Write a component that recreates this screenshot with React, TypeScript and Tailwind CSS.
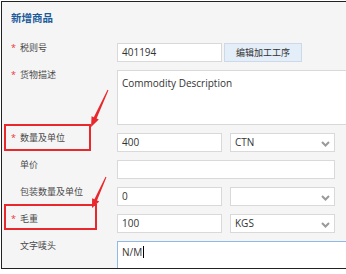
import React from 'react';

const cjk = { fontFamily: '"Noto Sans CJK SC", "Noto Sans", sans-serif' };
const latin = { fontFamily: '"Open Sans", "Noto Sans CJK SC", sans-serif' };

const Chevron: React.FC = () => (
  <svg width="9" height="6" viewBox="0 0 9 6" className="absolute right-[4px] top-[7px]">
    <polyline points="1,1 4.5,4.5 8,1" fill="none" stroke="#9a9a9a" strokeWidth="2" />
  </svg>
);

const Box: React.FC<{ w: string; value?: string; select?: boolean; extra?: string }> = ({ w, value, select, extra }) => (
  <div
    className={`relative h-[19px] ${w} bg-white border border-[#d9d9d9] pl-[4px] text-[10px] leading-[17px] text-[#333] ${extra ?? ''}`}
    style={latin}
  >
    {value}
    {select && <Chevron />}
  </div>
);

const Label: React.FC<{ text: string; req?: boolean }> = ({ text, req }) => (
  <div className="w-[115px] shrink-0 flex pl-[9px] -mt-[1px] text-[#4a4a4a]">
    <span className="w-[9px] text-[9px] leading-[12px] text-[#e33]" style={latin}>{req ? '*' : ''}</span>
    <span className="whitespace-nowrap text-[9px] leading-[12px]" style={cjk}>
      {text}
    </span>
  </div>
);

const Arrow: React.FC<{ pts: string }> = ({ pts }) => <polygon points={pts} fill="#e8282c" />;

export default function App() {
  return (
    <div className="relative w-[346px] h-[274px] bg-white pt-px pl-px overflow-hidden">
      <div className="relative h-[268px] w-[360px] border border-r-0 border-[#222] bg-[#f5f5f5] overflow-hidden">
        <div className="h-[41px] pl-[9px] pt-[8px] text-[10.5px] leading-[16px] font-bold text-[#1d5b9a]" style={cjk}>
          新增商品
        </div>
        <div className="flex flex-col gap-2">
          <div className="flex">
            <Label text="税则号" req />
            <Box w="w-[105px]" value="401194" />
            <div
              className="ml-[2px] h-[19px] w-[78px] bg-[#e4eef8] border border-[#cbd9e8] text-center text-[9px] leading-[17px] text-[#333]"
              style={cjk}
            >
              编辑加工工序
            </div>
          </div>
          <div className="flex">
            <Label text="货物描述" req />
            <div className="h-[55px] w-[240px] bg-white border border-[#d9d9d9] pl-[4px] pt-[6px] text-[10px] leading-[12px] text-[#333]" style={latin}>
              Commodity Description
            </div>
          </div>
          <div className="flex">
            <Label text="数量及单位" req />
            <Box w="w-[105px]" value="400" />
            <Box w="w-[105px]" value="CTN" select extra="ml-[8px]" />
          </div>
          <div className="flex">
            <Label text="单价" />
            <Box w="w-[218px]" />
          </div>
          <div className="flex">
            <Label text="包装数量及单位" />
            <Box w="w-[105px]" value="0" />
            <Box w="w-[105px]" select extra="ml-[8px]" />
          </div>
          <div className="flex">
            <Label text="毛重" req />
            <Box w="w-[105px]" value="100" />
            <Box w="w-[105px]" value="KGS" select extra="ml-[8px]" />
          </div>
          <div className="flex">
            <Label text="文字唛头" />
            <div className="h-[40px] w-[240px] bg-white border border-[#8fb9e6] pl-[4px] pt-[4px] text-[10px] leading-[12px] text-[#333] flex items-start" style={latin}>
              N/M<span className="ml-px w-px h-[12px] bg-black" />
            </div>
          </div>
        </div>
      </div>
      <div className="absolute left-[4px] top-[124px] w-[87px] h-[27px] border-2 border-[#e8282c]" />
      <div className="absolute left-[4px] top-[204px] w-[93px] h-[26px] border-2 border-[#e8282c]" />
      <svg className="absolute left-0 top-0" width="346" height="274">
        <Arrow pts="108.45,90.2 96.6,118.5 98.8,119.6 91,127 91.6,116.2 93.8,117.3 107.55,89.8" />
        <Arrow pts="106.46,177.2 97,200.4 99.3,201.4 92,208 92.1,198.2 94.4,199.2 105.54,176.8" />
      </svg>
    </div>
  );
}
